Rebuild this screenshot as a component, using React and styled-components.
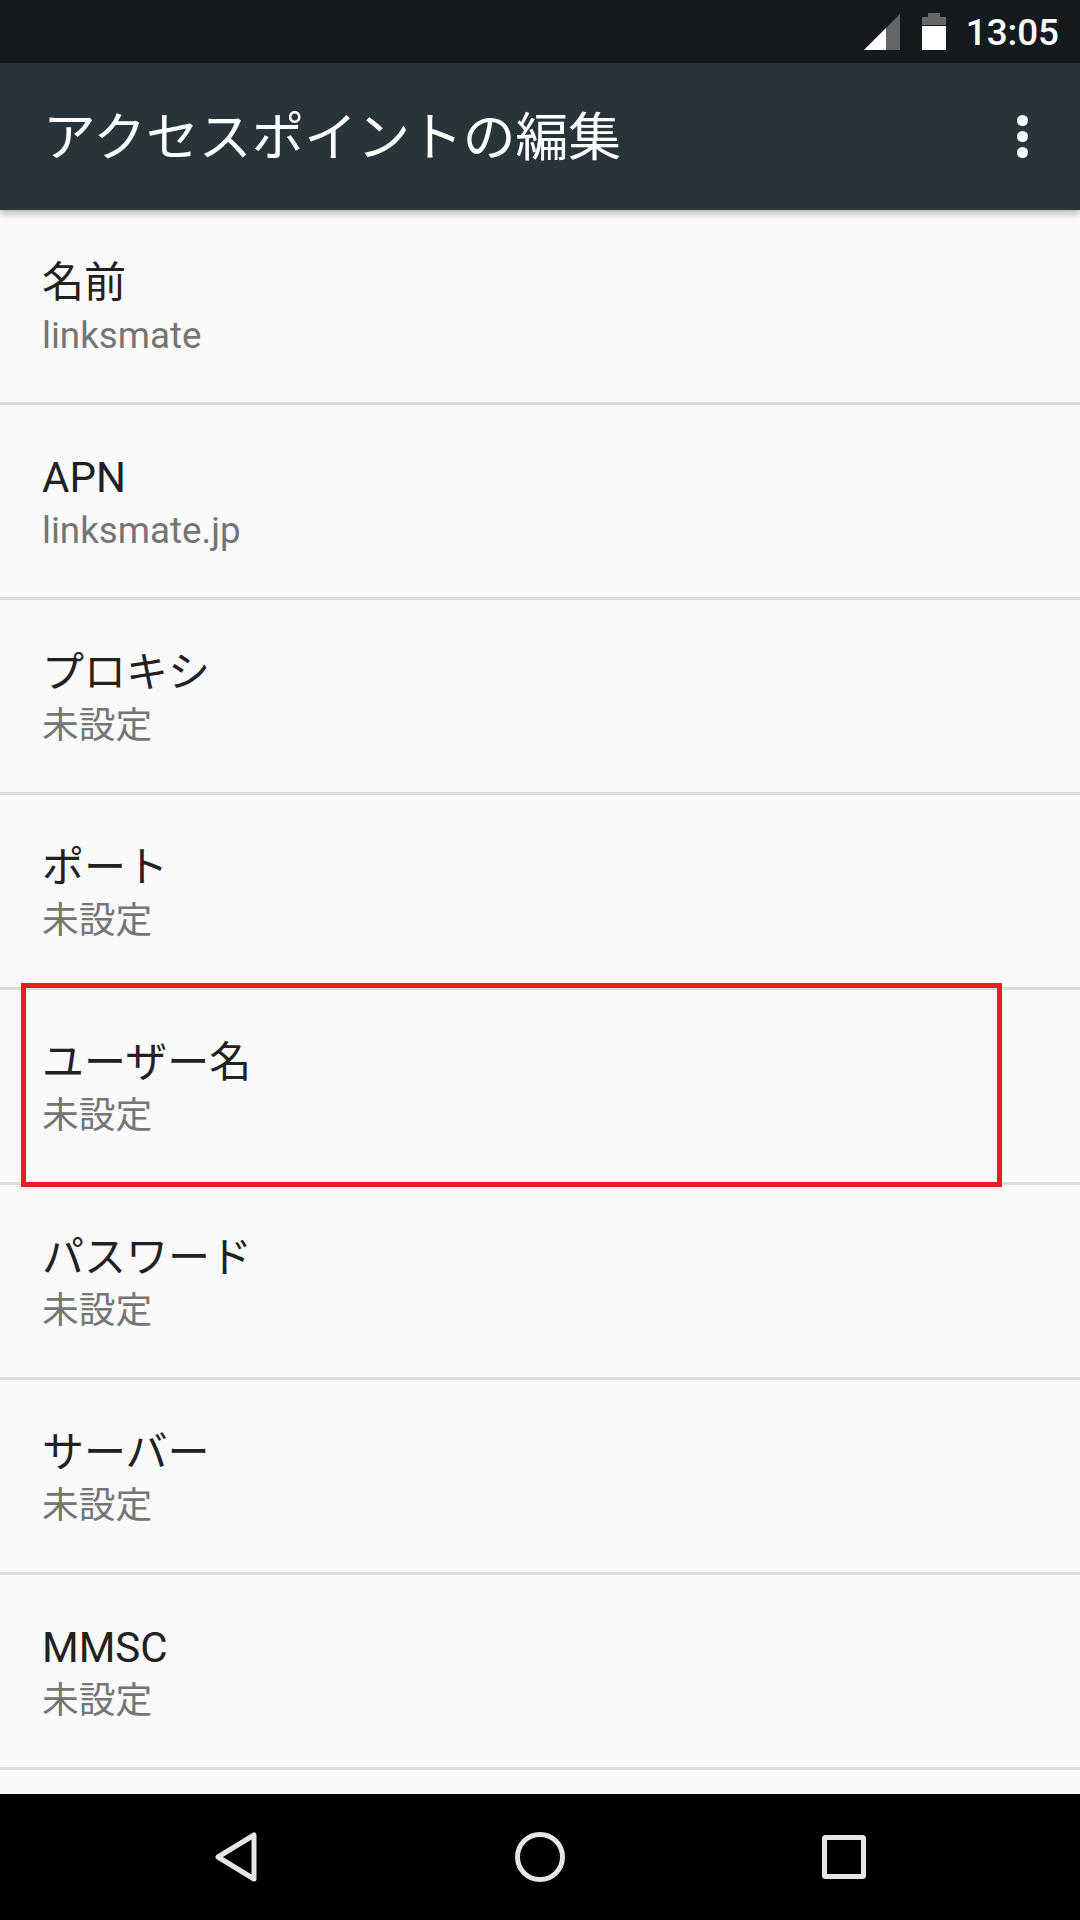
import React from "react";
import styled, { createGlobalStyle } from "styled-components";

const ITEMS = [
  { title: "名前", value: "linksmate" },
  { title: "APN", value: "linksmate.jp" },
  { title: "プロキシ", value: "未設定" },
  { title: "ポート", value: "未設定" },
  { title: "ユーザー名", value: "未設定", marked: true },
  { title: "パスワード", value: "未設定" },
  { title: "サーバー", value: "未設定" },
  { title: "MMSC", value: "未設定" },
];

const App = () => {
  return (
    <Screen>
      <GlobalStyle />
      <StatusBar>
        <svg width="36" height="36" viewBox="0 0 36 36">
          <path d="M36 0V36H0Z" fill="#666" />
          <path d="M22 14V36H0Z" fill="#fff" />
        </svg>
        <svg width="24" height="37" viewBox="0 0 24 37">
          <path d="M6 0H18V4H24V12H0V4H6Z" fill="#666" />
          <rect y="13" width="24" height="24" fill="#fff" />
        </svg>
        <Clock>13:05</Clock>
      </StatusBar>
      <Toolbar>
        <Title>アクセスポイントの編集</Title>
        <OverflowMenu>
          <Dot />
          <Dot />
          <Dot />
        </OverflowMenu>
      </Toolbar>
      <List>
        {ITEMS.map((item) => (
          <Row key={item.title} $marked={item.marked}>
            <RowTitle>{item.title}</RowTitle>
            <RowValue>{item.value}</RowValue>
          </Row>
        ))}
      </List>
      <NavBar>
        <svg width="42" height="50" viewBox="0 0 42 50">
          <path
            d="M39 3V47L3 25Z"
            fill="none"
            stroke="#e6e6e6"
            strokeWidth="5"
            strokeLinejoin="round"
          />
        </svg>
        <svg width="50" height="50" viewBox="0 0 50 50">
          <circle cx="25" cy="25" r="22.5" fill="none" stroke="#e6e6e6" strokeWidth="5" />
        </svg>
        <svg width="44" height="44" viewBox="0 0 44 44">
          <rect x="2.5" y="2.5" width="39" height="39" rx="1" fill="none" stroke="#e6e6e6" strokeWidth="5" />
        </svg>
      </NavBar>
    </Screen>
  );
};

export default App;

const GlobalStyle = createGlobalStyle`
  html, body {
    margin: 0;
    padding: 0;
    background: #fafafa;
  }
  body {
    font-family: Roboto, "Noto Sans CJK JP", sans-serif;
  }
`;

const Screen = styled.div`
  display: flex;
  flex-direction: column;
  width: 1080px;
  height: 1920px;
  overflow: hidden;
  background: #fafafa;
`;

const StatusBar = styled.div`
  display: flex;
  align-items: center;
  justify-content: flex-end;
  height: 63px;
  flex-shrink: 0;
  padding: 2px 21px 0 0;
  background: #151a1e;
  box-sizing: border-box;

  svg {
    margin-top: -2px;
  }

  svg:first-child {
    margin-right: 22px;
  }
`;

const Clock = styled.span`
  margin-left: 20px;
  color: #fff;
  font-size: 36.75px;
  font-weight: 500;
`;

const Toolbar = styled.div`
  position: relative;
  z-index: 1;
  display: flex;
  align-items: center;
  justify-content: space-between;
  height: 147px;
  flex-shrink: 0;
  padding: 0 52px 0 43px;
  background: #29333a;
  box-shadow: 0 3px 8px rgba(0, 0, 0, 0.3);
  box-sizing: border-box;
`;

const Title = styled.h1`
  margin: 0 0 8px;
  color: #fff;
  font-size: 52.8px;
  font-weight: 400;
  white-space: nowrap;
`;

const OverflowMenu = styled.div`
  display: flex;
  flex-direction: column;
  gap: 5px;
`;

const Dot = styled.span`
  width: 11px;
  height: 11px;
  border-radius: 50%;
  background: #fff;
`;

const List = styled.div`
  flex: 1;
  overflow: hidden;
`;

const Row = styled.div`
  position: relative;
  display: flex;
  flex-direction: column;
  justify-content: center;
  height: 195px;
  padding: 3px 0 0 42px;
  border-bottom: 3px solid #dcdcdc;
  box-sizing: border-box;

  ${(p) =>
    p.$marked &&
    `
    &::after {
      content: "";
      position: absolute;
      top: -7px;
      left: 21px;
      width: 981px;
      height: 204px;
      border: 5px solid #ed1c24;
      box-sizing: border-box;
    }
  `}
`;

const RowTitle = styled.div`
  color: #212121;
  font-size: 42px;
  line-height: 56px;
`;

const RowValue = styled.div`
  color: #757575;
  font-size: 36.75px;
  line-height: 49px;
`;

const NavBar = styled.div`
  display: flex;
  align-items: center;
  height: 126px;
  flex-shrink: 0;
  background: #000;
  padding-left: 215px;
  gap: 257.5px;
  box-sizing: border-box;
`;
